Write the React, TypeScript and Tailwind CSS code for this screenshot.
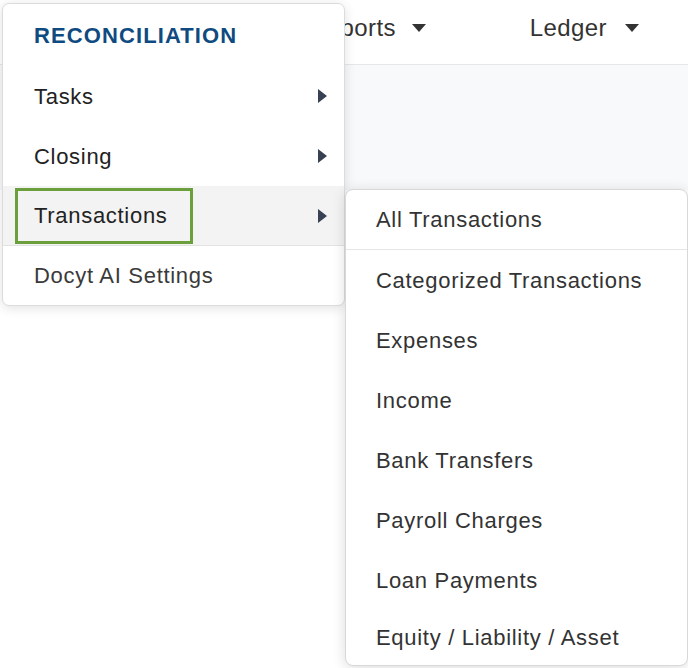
import React from 'react';

const SUB_ITEMS = [
  'Categorized Transactions',
  'Expenses',
  'Income',
  'Bank Transfers',
  'Payroll Charges',
  'Loan Payments',
];

function CaretRight() {
  return (
    <svg width="9" height="14" viewBox="0 0 9 14" className="shrink-0">
      <path d="M0 0 L9 7 L0 14 Z" fill="#374151" />
    </svg>
  );
}

function CaretDown() {
  return (
    <svg width="14" height="8" viewBox="0 0 14 8" className="shrink-0">
      <path d="M0 0 L14 0 L7 8 Z" fill="#333333" />
    </svg>
  );
}

function MenuRow({ label, hasArrow = true }: { label: string; hasArrow?: boolean }) {
  return (
    <div className="flex h-[60px] items-center justify-between pl-[31px] pr-[17px] text-[#222]">
      <span>{label}</span>
      {hasArrow && <CaretRight />}
    </div>
  );
}

export default function App() {
  return (
    <div
      className="relative h-[668px] w-[688px] overflow-hidden bg-white text-[22px] tracking-[0.7px]"
      style={{ fontFamily: '"Liberation Sans", Arial, sans-serif' }}
    >
      {/* Top nav */}
      <div className="flex h-[65px] items-center justify-end gap-[104px] border-b border-[#e5e7eb] pb-[9px] pr-[49px] text-[24px] tracking-[0.4px] text-[#333]">
        <div className="flex items-center gap-[16px]">
          <span>Reports</span>
          <CaretDown />
        </div>
        <div className="flex items-center gap-[18px]">
          <span>Ledger</span>
          <CaretDown />
        </div>
      </div>
      <div className="h-[125px] bg-[#f8f9fa]" />

      {/* Main dropdown */}
      <div className="absolute left-[2px] top-[3px] w-[343px] overflow-hidden rounded-[7px] border border-[#dcdcdc] bg-white shadow-[0_2px_12px_rgba(0,0,0,0.12)]">
        <div className="flex h-[62px] items-center pl-[31px] font-bold tracking-[1.1px] text-[#0f4a80]">
          RECONCILIATION
        </div>
        <MenuRow label="Tasks" />
        <MenuRow label="Closing" />
        <div className="flex h-[60px] items-center justify-between border-b border-[#e2e2e2] bg-[#f3f3f3] pl-[12px] pr-[17px] text-[#222]">
          <div className="flex h-[56px] w-[178px] items-center border-[3px] border-[#6a9f3b] pl-[16px]">
            Transactions
          </div>
          <CaretRight />
        </div>
        <div className="flex h-[59px] items-center pl-[31px] text-[#3a3a3a]">Docyt AI Settings</div>
      </div>

      {/* Sub menu */}
      <div className="absolute left-[345px] top-[189px] w-[343px] overflow-hidden rounded-[8px] border border-[#d8d8d8] bg-white text-[#333] shadow-[0_2px_14px_rgba(0,0,0,0.14)]">
        <div className="flex h-[60px] items-center border-b border-[#e5e5e5] pl-[30px]">All Transactions</div>
        {SUB_ITEMS.map((s) => (
          <div key={s} className="flex h-[60px] items-center pl-[30px]">
            {s}
          </div>
        ))}
        <div className="flex h-[55px] items-center pl-[30px]">Equity / Liability / Asset</div>
      </div>
    </div>
  );
}
